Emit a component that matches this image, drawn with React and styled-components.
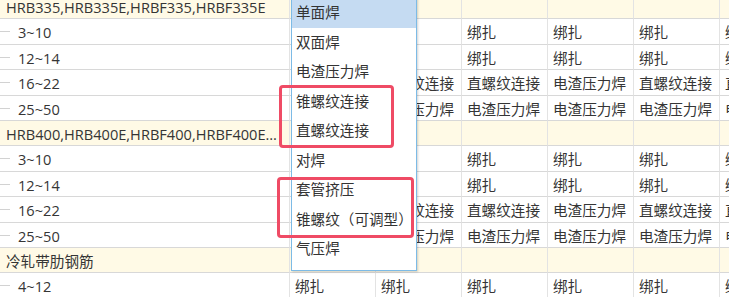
import React from "react";
import styled, { createGlobalStyle } from "styled-components";

const GlobalStyle = createGlobalStyle`
  html, body {
    margin: 0;
    padding: 0;
    background: #ffffff;
    overflow: hidden;
  }
  body {
    font-family: "Open Sans", "Noto Sans CJK SC", sans-serif;
    font-size: 14.6px;
    color: #353535;
  }
`;

const Page = styled.div`
  position: relative;
  width: 729px;
  height: 297px;
  overflow: hidden;
`;

const Table = styled.div`
  display: flex;
  flex-direction: column;
  margin-top: -6px;
`;

const Row = styled.div`
  display: grid;
  grid-template-columns: 290px repeat(6, 86px);
  height: 25.4px;
  background: ${(p) => (p.$group ? "#fffae6" : "#ffffff")};
`;

const Cell = styled.div`
  position: relative;
  box-sizing: border-box;
  border-right: 1px solid #e3e3e3;
  border-bottom: 1px solid #d8d8d8;
  padding-left: 5px;
  padding-top: 1px;
  line-height: 24px;
  white-space: nowrap;
  overflow: hidden;
`;

const NameCell = styled(Cell)`
  padding-left: ${(p) => (p.$group ? "6px" : "18px")};
  padding-right: 10px;
  text-overflow: ellipsis;

  &::before {
    content: "";
    display: ${(p) => (p.$group ? "none" : "block")};
    position: absolute;
    left: 0;
    top: 12px;
    width: 10px;
    height: 1px;
    background: #d2d2d2;
  }
`;

const Popup = styled.div`
  position: absolute;
  left: 291px;
  top: -3px;
  width: 126px;
  box-sizing: border-box;
  padding-bottom: 6px;
  background: #ffffff;
  border: 1px solid #7dbbe6;
  box-shadow: 1px 1px 2px rgba(0, 0, 0, 0.18);
  display: flex;
  flex-direction: column;
`;

const Option = styled.div`
  height: 29.5px;
  line-height: 29.5px;
  padding-left: 4px;
  white-space: nowrap;
  color: #333333;
  background: ${(p) => (p.$active ? "#c5dbf2" : "transparent")};
`;

const Mark = styled.div`
  position: absolute;
  box-sizing: border-box;
  border: 3px solid #ef4b65;
  border-radius: 4px;
  pointer-events: none;
`;

const B = "绑扎";
const Z = "直螺纹连接";
const D = "电渣压力焊";

const rows = [
  { group: true, name: "HRB335,HRB335E,HRBF335,HRBF335E", cells: ["", "", "", "", "", ""] },
  { name: "3~10", cells: [B, B, B, B, B, B] },
  { name: "12~14", cells: [B, B, B, B, B, B] },
  { name: "16~22", cells: [Z, Z, Z, D, Z, Z] },
  { name: "25~50", cells: [D, D, D, D, D, D] },
  { group: true, name: "HRB400,HRB400E,HRBF400,HRBF400E,RRB400", cells: ["", "", "", "", "", ""] },
  { name: "3~10", cells: [B, B, B, B, B, B] },
  { name: "12~14", cells: [B, B, B, B, B, B] },
  { name: "16~22", cells: [Z, Z, Z, D, Z, Z] },
  { name: "25~50", cells: [D, D, D, D, D, D] },
  { group: true, name: "冷轧带肋钢筋", cells: ["", "", "", "", "", ""] },
  { name: "4~12", cells: [B, B, B, B, B, B] },
];

const options = [
  "单面焊",
  "双面焊",
  "电渣压力焊",
  "锥螺纹连接",
  "直螺纹连接",
  "对焊",
  "套管挤压",
  "锥螺纹（可调型）",
  "气压焊",
];

export default function App() {
  return (
    <>
      <GlobalStyle />
      <Page>
        <Table>
          {rows.map((r, i) => (
            <Row key={i} $group={r.group}>
              <NameCell $group={r.group}>{r.name}</NameCell>
              {r.cells.map((c, j) => (
                <Cell key={j}>{c}</Cell>
              ))}
            </Row>
          ))}
        </Table>
        <Popup>
          {options.map((o, i) => (
            <Option key={o} $active={i === 0}>
              {o}
            </Option>
          ))}
        </Popup>
        <Mark style={{ left: 279, top: 85, width: 115, height: 63 }} />
        <Mark style={{ left: 277, top: 177, width: 137, height: 61 }} />
      </Page>
    </>
  );
}
